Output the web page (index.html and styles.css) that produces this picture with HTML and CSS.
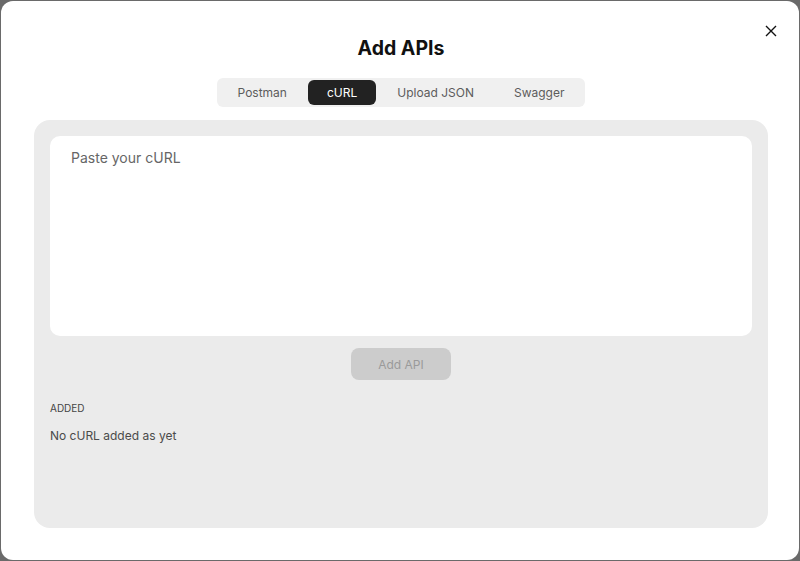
FILE: index.html
```html
<!DOCTYPE html>
<html lang="en">
<head>
    <meta charset="UTF-8">
    <meta name="viewport" content="width=device-width, initial-scale=1.0">
    <title>Add APIs</title>
    <link rel="stylesheet" href="styles.css">
</head>
<body>
    <div class="modal">
        <button class="close-btn" aria-label="Close">
            <svg width="12" height="12" viewBox="0 0 12 12"><path d="M1 1L11 11M11 1L1 11" stroke="#111" stroke-width="1.4" fill="none"/></svg>
        </button>
        <h2 class="title">Add APIs</h2>
        <div class="tabs">
            <button class="tab">Postman</button>
            <button class="tab active">cURL</button>
            <button class="tab">Upload JSON</button>
            <button class="tab">Swagger</button>
        </div>
        <div class="panel">
            <textarea class="curl-input" placeholder="Paste your cURL"></textarea>
            <div class="actions">
                <button class="add-btn" disabled>Add API</button>
            </div>
            <div class="added-label">ADDED</div>
            <div class="empty-msg">No cURL added as yet</div>
        </div>
    </div>
</body>
</html>
```

FILE: styles.css
```css
* { margin: 0; padding: 0; box-sizing: border-box; font-family: Inter, 'Noto Sans', sans-serif; }
body { background: #6a6a6a; height: 561px; padding: 1px; overflow: hidden; }
.modal { position: relative; background: #fff; height: 559px; border-radius: 12px; padding: 34px 31px 32px 33px; display: flex; flex-direction: column; align-items: center; }
.close-btn { position: absolute; top: 24px; right: 22px; width: 12px; height: 12px; border: none; background: none; cursor: pointer; display: flex; }
.title { font-size: 19.5px; font-weight: 700; color: #111; line-height: 26px; }
.tabs { margin-top: 17px; display: flex; gap: 2px; padding: 2px; background: #f0f0f0; border-radius: 6px; }
.tab { border: none; background: none; padding: 0 19px; height: 25px; font-size: 12px; color: #5c5c5c; border-radius: 6px; cursor: pointer; }
.tab.active { background: #222; color: #fff; }
.panel { align-self: stretch; margin-top: 13px; flex: 1; background: #ebebeb; border-radius: 16px; padding: 16px 16px; display: flex; flex-direction: column; }
.curl-input { height: 200px; border: none; border-radius: 10px; background: #fff; padding: 13px 21px; font-size: 14px; resize: none; outline: none; color: #333; }
.curl-input::placeholder { color: #666; }
.actions { display: flex; justify-content: center; margin-top: 12px; }
.add-btn { width: 100px; height: 32px; border: none; border-radius: 8px; background: #cccccc; color: #9a9a9a; font-size: 12px; }
.added-label { margin-top: 22px; font-size: 10px; color: #444; }
.empty-msg { margin-top: 14px; font-size: 12px; color: #4a4a4a; }
```
